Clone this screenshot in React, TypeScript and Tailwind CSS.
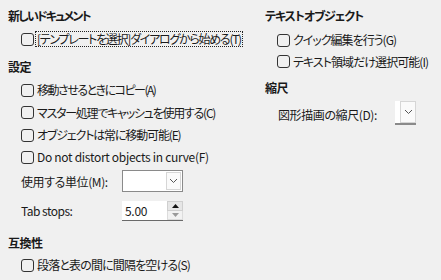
const FONT = "font-['Noto_Sans_CJK_JP','Noto_Sans',sans-serif] [font-feature-settings:'palt']";

function Chevron() {
  return (
    <svg width="9" height="6" viewBox="0 0 9 6" className="block">
      <polyline points="1,1 4.5,4.5 8,1" fill="none" stroke="#555" strokeWidth="1" />
    </svg>
  );
}

function Check({
  label,
  focus,
  tr,
  h = "h-[22px]",
}: {
  label: string;
  focus?: boolean;
  tr: string;
  h?: string;
}) {
  return (
    <div className={`flex items-center whitespace-nowrap ${h}`}>
      <span className="w-[13px] h-[13px] shrink-0 rounded-[3px] border border-[#333]" />
      <span
        className={
          focus
            ? `ml-[2px] px-[1px] leading-[14px] outline-1 outline-dotted outline-[#222] ${tr}`
            : `ml-[3px] leading-[14px] ${tr}`
        }
      >
        {label}
      </span>
    </div>
  );
}

function Heading({ children, className = "" }: { children: string; className?: string }) {
  return <div className={`h-5 leading-5 font-bold whitespace-nowrap ${className}`}>{children}</div>;
}

export default function App() {
  return (
    <div className={`w-[441px] h-[280px] bg-[#f0f0f0] text-[12px] text-[#1a1a1a] flex pl-2 ${FONT}`}>
      {/* left column */}
      <div className="w-[257px] shrink-0 flex flex-col">
        <Heading className="mt-[6px] tracking-[-1.8px]">新しいドキュメント</Heading>
        <div className="pl-[13px] mt-[2px]">
          <Check label="[テンプレートを選択]ダイアログから始める(T)" focus tr="tracking-[-1.27px]" />
        </div>

        <Heading className="mt-[7px] tracking-[-0.5px]">設定</Heading>
        <div className="pl-[13px] mt-[2px] flex flex-col">
          <Check label="移動させるときにコピー(A)" tr="tracking-[-1.5px]" />
          <Check label="マスター処理でキャッシュを使用する(C)" tr="tracking-[-1.25px]" h="h-[23px]" />
          <Check label="オブジェクトは常に移動可能(E)" tr="tracking-[-1.15px]" />
          <Check label="Do not distort objects in curve(F)" tr="tracking-[-0.3px]" />

          <div className="flex items-center h-[22px] mt-[2px] whitespace-nowrap">
            <span className="w-[101px] pt-[2px] tracking-[-0.4px]">使用する単位(M):</span>
            <div className="w-[61px] h-[22px] bg-white border border-[#8a8a8a] flex justify-end items-stretch">
              <div className="w-[15px] my-[1px] mr-[1px] border border-[#d6d6d6] bg-[#fafafa] flex items-center justify-center">
                <Chevron />
              </div>
            </div>
          </div>

          <div className="flex items-center h-[20px] mt-[9px] whitespace-nowrap">
            <span className="w-[101px] tracking-[-0.5px]">Tab stops:</span>
            <div className="w-[61px] h-[20px] bg-white border-b border-[#6a6a6a] flex items-center justify-between">
              <span className="pl-[3px] tracking-[-0.3px]">5.00</span>
              <div className="w-[16px] h-[19px] flex flex-col">
                <div className="h-[10px] bg-[#e6e6e6] border border-[#cfcfcf] flex items-center justify-center">
                  <svg width="7" height="4" viewBox="0 0 7 4" className="block">
                    <polygon points="0,4 3.5,0 7,4" fill="#111" />
                  </svg>
                </div>
                <div className="h-[9px] bg-[#f2f2f2] border border-t-0 border-[#dcdcdc] flex items-center justify-center">
                  <svg width="7" height="4" viewBox="0 0 7 4" className="block">
                    <polygon points="0,0 3.5,4 7,0" fill="#9a9a9a" />
                  </svg>
                </div>
              </div>
            </div>
          </div>
        </div>

        <Heading className="mt-[12px] tracking-[-0.5px]">互換性</Heading>
        <div className="pl-[13px] mt-[1px]">
          <Check label="段落と表の間に間隔を空ける(S)" tr="tracking-[-0.84px]" />
        </div>
      </div>

      {/* right column */}
      <div className="flex-1 flex flex-col">
        <Heading className="mt-[6px] tracking-[-1.07px]">テキストオブジェクト</Heading>
        <div className="pl-[12px] mt-[3px] flex flex-col">
          <Check label="クイック編集を行う(G)" tr="tracking-[-1px]" />
          <Check label="テキスト領域だけ選択可能(I)" tr="tracking-[-0.95px]" h="h-[21px]" />
        </div>

        <Heading className="mt-[6px] tracking-[-0.5px]">縮尺</Heading>
        <div className="pl-[13px] mt-[2px] flex items-center h-[25px] whitespace-nowrap">
          <span className="w-[117px] pt-[4px] tracking-[-0.4px]">図形描画の縮尺(D):</span>
          <div className="w-[21px] h-[24px] bg-white border-b-2 border-[#8a8a8a] flex justify-end">
            <div className="w-[16px] border border-[#d6d6d6] bg-[#fafafa] flex items-center justify-center">
              <Chevron />
            </div>
          </div>
        </div>
      </div>
    </div>
  );
}
